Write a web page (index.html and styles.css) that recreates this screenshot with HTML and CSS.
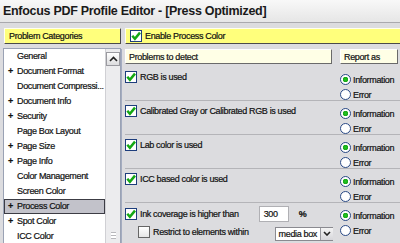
FILE: index.html
```html
<!DOCTYPE html>
<html lang="en">
<head>
    <meta charset="UTF-8">
    <title>Enfocus PDF Profile Editor</title>
    <link rel="stylesheet" href="styles.css">
</head>
<body>
    <div class="titlebar">
        <h1>Enfocus PDF Profile Editor - [Press Optimized]</h1>
    </div>

    <div class="main">
        <div class="categories">
            <div class="panel-head">Problem Categories</div>
            <div class="list">
                <ul class="items">
                    <li>General</li>
                    <li class="has-sub">Document Format</li>
                    <li>Document Compressi...</li>
                    <li class="has-sub">Document Info</li>
                    <li class="has-sub">Security</li>
                    <li>Page Box Layout</li>
                    <li class="has-sub">Page Size</li>
                    <li class="has-sub">Page Info</li>
                    <li>Color Management</li>
                    <li>Screen Color</li>
                    <li class="has-sub selected">Process Color</li>
                    <li class="has-sub">Spot Color</li>
                    <li>ICC Color</li>
                </ul>
                <div class="scrollbar">
                    <div class="scroll-btn">
                        <svg width="9" height="6" viewBox="0 0 9 6"><path d="M1 5 L4.5 1.5 L8 5" fill="none" stroke="#222" stroke-width="1.6"/></svg>
                    </div>
                    <div class="track"><span class="grip"></span></div>
                </div>
            </div>
        </div>

        <div class="details">
            <div class="panel-head enable">
                <span class="check on"></span>Enable Process Color
            </div>
            <div class="detail-body">
                <div class="cols-head">
                    <div class="col-box">Problems to detect</div>
                    <div class="col-box">Report as</div>
                </div>

                <div class="row">
                    <div class="problem"><span class="check on"></span>RGB is used</div>
                    <div class="report">
                        <label class="radio on">Information</label>
                        <label class="radio">Error</label>
                    </div>
                </div>

                <div class="row">
                    <div class="problem"><span class="check on"></span>Calibrated Gray or Calibrated RGB is used</div>
                    <div class="report">
                        <label class="radio on">Information</label>
                        <label class="radio">Error</label>
                    </div>
                </div>

                <div class="row">
                    <div class="problem"><span class="check on"></span>Lab color is used</div>
                    <div class="report">
                        <label class="radio on">Information</label>
                        <label class="radio">Error</label>
                    </div>
                </div>

                <div class="row">
                    <div class="problem"><span class="check on"></span>ICC based color is used</div>
                    <div class="report">
                        <label class="radio on">Information</label>
                        <label class="radio">Error</label>
                    </div>
                </div>

                <div class="row last">
                    <div class="problem">
                        <div class="line">
                            <span class="check on"></span>Ink coverage is higher than
                            <span class="field">300</span>
                            <span class="unit">%</span>
                        </div>
                        <div class="line sub">
                            <span class="check"></span>Restrict to elements within
                            <span class="select">media box<span class="arrow">
                                <svg width="8" height="5" viewBox="0 0 8 5"><path d="M1 1 L4 4 L7 1" fill="none" stroke="#222" stroke-width="1.6"/></svg>
                            </span></span>
                        </div>
                    </div>
                    <div class="report">
                        <label class="radio on">Information</label>
                        <label class="radio">Error</label>
                    </div>
                </div>
            </div>
        </div>
    </div>
</body>
</html>
```

FILE: styles.css
```css
body {
    margin: 0;
    background-color: #dcdcdf;
    font-family: "Liberation Sans", Arial, sans-serif;
    font-size: 9px;
    letter-spacing: -0.35px;
    -webkit-text-stroke: 0.2px;
    color: #111;
    overflow: hidden;
    height: 243px;
    white-space: nowrap;
}
.titlebar {
    height: 22px;
    background: linear-gradient(#f8f8f8, #e6e6e6);
    border-bottom: 1px solid #a9a9ad;
}
.titlebar h1 {
    margin: 0;
    padding: 4px 0 0 3px;
    font-size: 12.5px;
    letter-spacing: -0.3px;
    font-weight: bold;
    -webkit-text-stroke: 0;
    color: #1a1a1a;
}
.main {
    display: grid;
    grid-template-columns: 118px 1fr;
    padding: 5px 0 0 3px;
}
.panel-head {
    height: 16px;
    box-sizing: border-box;
    background-color: #ffff7c;
    border: 1px solid #fffff0;
    border-right-color: #4a4a4a;
    border-bottom-color: #4a4a4a;
    display: flex;
    align-items: center;
    padding-left: 4px;
    margin-left: 1px;
}
.list {
    margin-top: 4px;
    height: 200px;
    background-color: white;
    border: 1px solid #9aa2b4;
    display: flex;
}
.items {
    list-style: none;
    margin: 0;
    padding: 0;
    flex: 1;
}
.items li {
    height: 15px;
    line-height: 15px;
    padding-left: 13px;
    position: relative;
}
.items li.has-sub::before {
    content: "+";
    position: absolute;
    left: 4px;
    font-weight: bold;
}
.items li.selected {
    background-color: #c2c2ca;
    outline: 1px solid #3c3c44;
    outline-offset: -1px;
}
.scrollbar {
    width: 14px;
    display: flex;
    flex-direction: column;
    background-color: #ececee;
    border-left: 1px solid #d0d0d4;
}
.scroll-btn {
    height: 12px;
    margin: 3px 0 0 0;
    border: 1px solid #9a9aa0;
    background: linear-gradient(#ffffff, #dcdcde);
    display: flex;
    align-items: center;
    justify-content: center;
}
.track {
    flex: 1;
    display: flex;
    align-items: flex-end;
    justify-content: center;
    padding-bottom: 10px;
}
.grip {
    width: 5px;
    height: 5px;
    border-top: 1px solid #b8b8bc;
    border-bottom: 1px solid #b8b8bc;
    background: linear-gradient(#fff 40%, #b8b8bc 40%, #b8b8bc 60%, #fff 60%);
}
.details {
    display: flex;
    flex-direction: column;
}
.enable {
    margin-left: 4px;
    padding-left: 4px;
    border-right: none;
}
.enable .check {
    margin-right: 3px;
}
.detail-body {
    margin-top: 5px;
    border-left: 1px solid #a4acc0;
    padding-left: 3px;
    height: 200px;
}
.cols-head {
    display: grid;
    grid-template-columns: 207px 58px;
    gap: 8px;
    margin-bottom: 3px;
}
.col-box {
    height: 15px;
    box-sizing: border-box;
    background-color: #ffffe6;
    border: 1px solid #fff;
    border-right-color: #6a6a6a;
    border-bottom-color: #6a6a6a;
    display: flex;
    align-items: center;
    padding-left: 3px;
}
.row {
    display: grid;
    grid-template-columns: 215px 58px;
    height: 34px;
    box-sizing: border-box;
    border-bottom: 1px solid #b4b4b8;
    padding-top: 4px;
}
.row.last {
    border-bottom: none;
}
.problem {
    display: flex;
    align-items: flex-start;
    line-height: 12px;
}
.row.last .problem {
    flex-direction: column;
}
.line {
    display: flex;
    align-items: center;
    height: 14px;
}
.line.sub {
    padding-left: 13px;
    margin-top: 4px;
}
.check {
    width: 12px;
    height: 12px;
    box-sizing: border-box;
    border: 1px solid #1d3d7c;
    background: white;
    margin-right: 3px;
    flex: none;
    display: inline-block;
}
.check.on {
    background: white url("data:image/svg+xml;utf8,<svg xmlns='http://www.w3.org/2000/svg' width='10' height='10' viewBox='0 0 10 10'><path d='M1.3 4.8 L3.9 7.9 L9 1.6' fill='none' stroke='%2314a814' stroke-width='2.5'/></svg>") center no-repeat;
}
.line.sub .check {
    border-color: #666;
    background: linear-gradient(#ffffff, #e6e6e6);
}
.field {
    width: 30px;
    height: 16px;
    box-sizing: border-box;
    background: white;
    border: 1px solid #b0b0b4;
    margin-left: 20px;
    padding-left: 4px;
    display: flex;
    align-items: center;
}
.unit {
    margin-left: 10px;
    font-weight: bold;
}
.select {
    margin-left: 26px;
    margin-top: 3px;
    width: 58px;
    height: 14px;
    box-sizing: border-box;
    background: white;
    border: 1px solid #8a8a90;
    display: flex;
    align-items: center;
    padding-left: 3px;
    gap: 3px;
}
.arrow {
    flex: none;
    margin-left: auto;
    width: 12px;
    height: 12px;
    border-left: 1px solid #9a9aa0;
    background: linear-gradient(#f4f4f4, #d6d6da);
    display: flex;
    align-items: center;
    justify-content: center;
}
.report {
    display: flex;
    flex-direction: column;
    padding-top: 1px;
}
.radio {
    display: flex;
    align-items: center;
    height: 15px;
}
.radio::before {
    content: "";
    width: 11px;
    height: 11px;
    box-sizing: border-box;
    border: 1px solid #2a4a86;
    border-radius: 50%;
    background: white;
    margin-right: 2px;
}
.radio.on::before {
    background: radial-gradient(circle, #22c822 0, #1aa81a 2.5px, #ffffff 3px);
}
```
